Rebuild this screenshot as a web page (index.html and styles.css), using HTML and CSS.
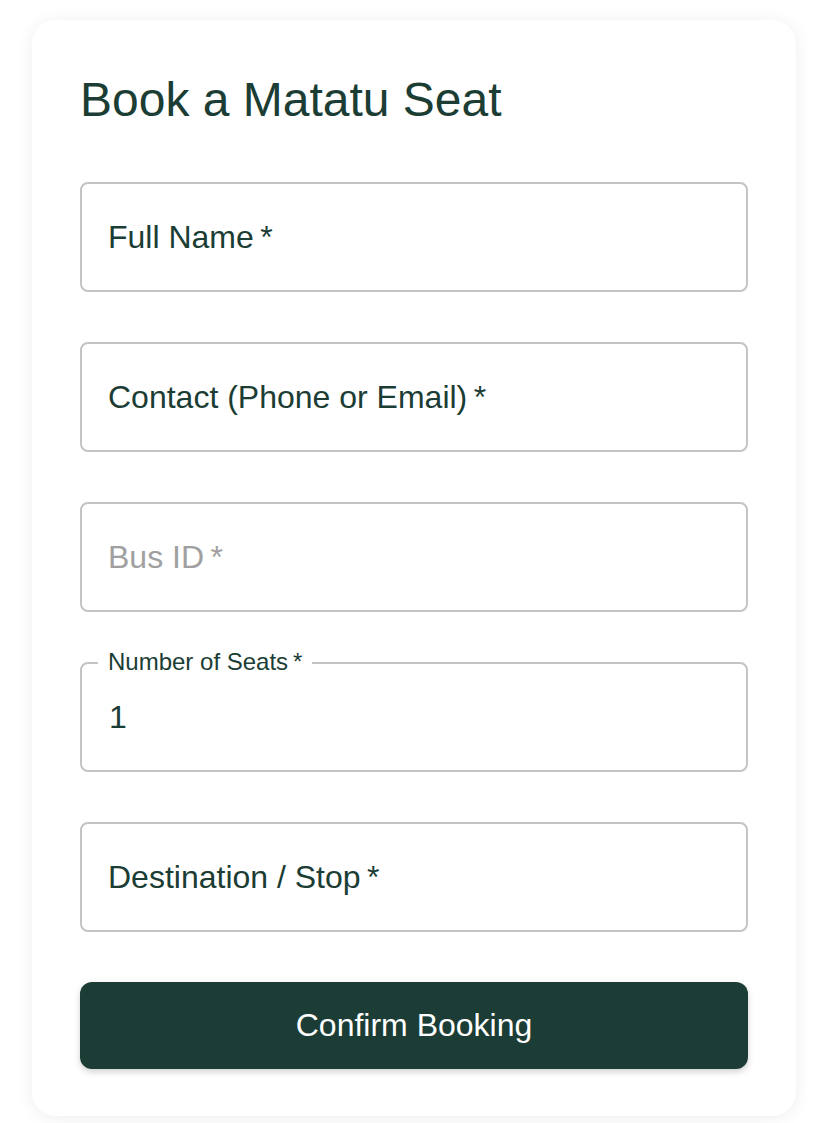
FILE: index.html
```html
<!DOCTYPE html>
<html lang="en">
<head>
<meta charset="utf-8">
<title>Book a Matatu Seat</title>
<link rel="stylesheet" href="styles.css">
</head>
<body>
<main class="card">
  <h1 class="title">Book a Matatu Seat</h1>
  <form class="form">
    <div class="field"><span class="label">Full Name&thinsp;*</span></div>
    <div class="field"><span class="label">Contact (Phone or Email)&thinsp;*</span></div>
    <div class="field"><span class="label label-muted">Bus ID&thinsp;*</span></div>
    <div class="field">
      <span class="legend">Number of Seats&thinsp;*</span>
      <span class="value">1</span>
    </div>
    <div class="field"><span class="label">Destination / Stop&thinsp;*</span></div>
    <button type="button" class="button">Confirm Booking</button>
  </form>
</main>
</body>
</html>
```

FILE: styles.css
```css
* { box-sizing: border-box; }

html, body {
  margin: 0;
  padding: 0;
  background: #ffffff;
}

body {
  font-family: "Liberation Sans", Arial, sans-serif;
  color: #1b3d34;
  padding: 20px 32px 7px;
}

.card {
  background: #ffffff;
  border-radius: 24px;
  box-shadow: 0 2px 18px rgba(0, 0, 0, 0.07);
  padding: 51px 48px 47px;
}

.title {
  margin: 0 0 53px;
  font-size: 48px;
  font-weight: 400;
  line-height: 58px;
  color: #1b3d34;
}

.form {
  display: flex;
  flex-direction: column;
  gap: 50px;
}

.field {
  position: relative;
  display: flex;
  align-items: center;
  height: 110px;
  border: 2px solid #c4c4c4;
  border-radius: 8px;
  padding: 0 26px;
}

.label {
  display: block;
  font-size: 32px;
  line-height: 32px;
  color: #1b3d34;
}

.label-muted {
  color: #a0a0a0;
}

.legend {
  position: absolute;
  left: 16px;
  top: -14px;
  padding: 0 10px;
  background: #ffffff;
  font-size: 24px;
  line-height: 24px;
  color: #1b3d34;
}

.value {
  font-size: 32px;
  line-height: 32px;
  color: #1b3d34;
  margin-left: 1px;
}

.button {
  height: 87px;
  border: none;
  border-radius: 12px;
  background: #1c3d35;
  color: #ffffff;
  font-family: "Liberation Sans", Arial, sans-serif;
  font-size: 32px;
  box-shadow: 0 3px 6px rgba(0, 0, 0, 0.18);
  cursor: pointer;
}
```
